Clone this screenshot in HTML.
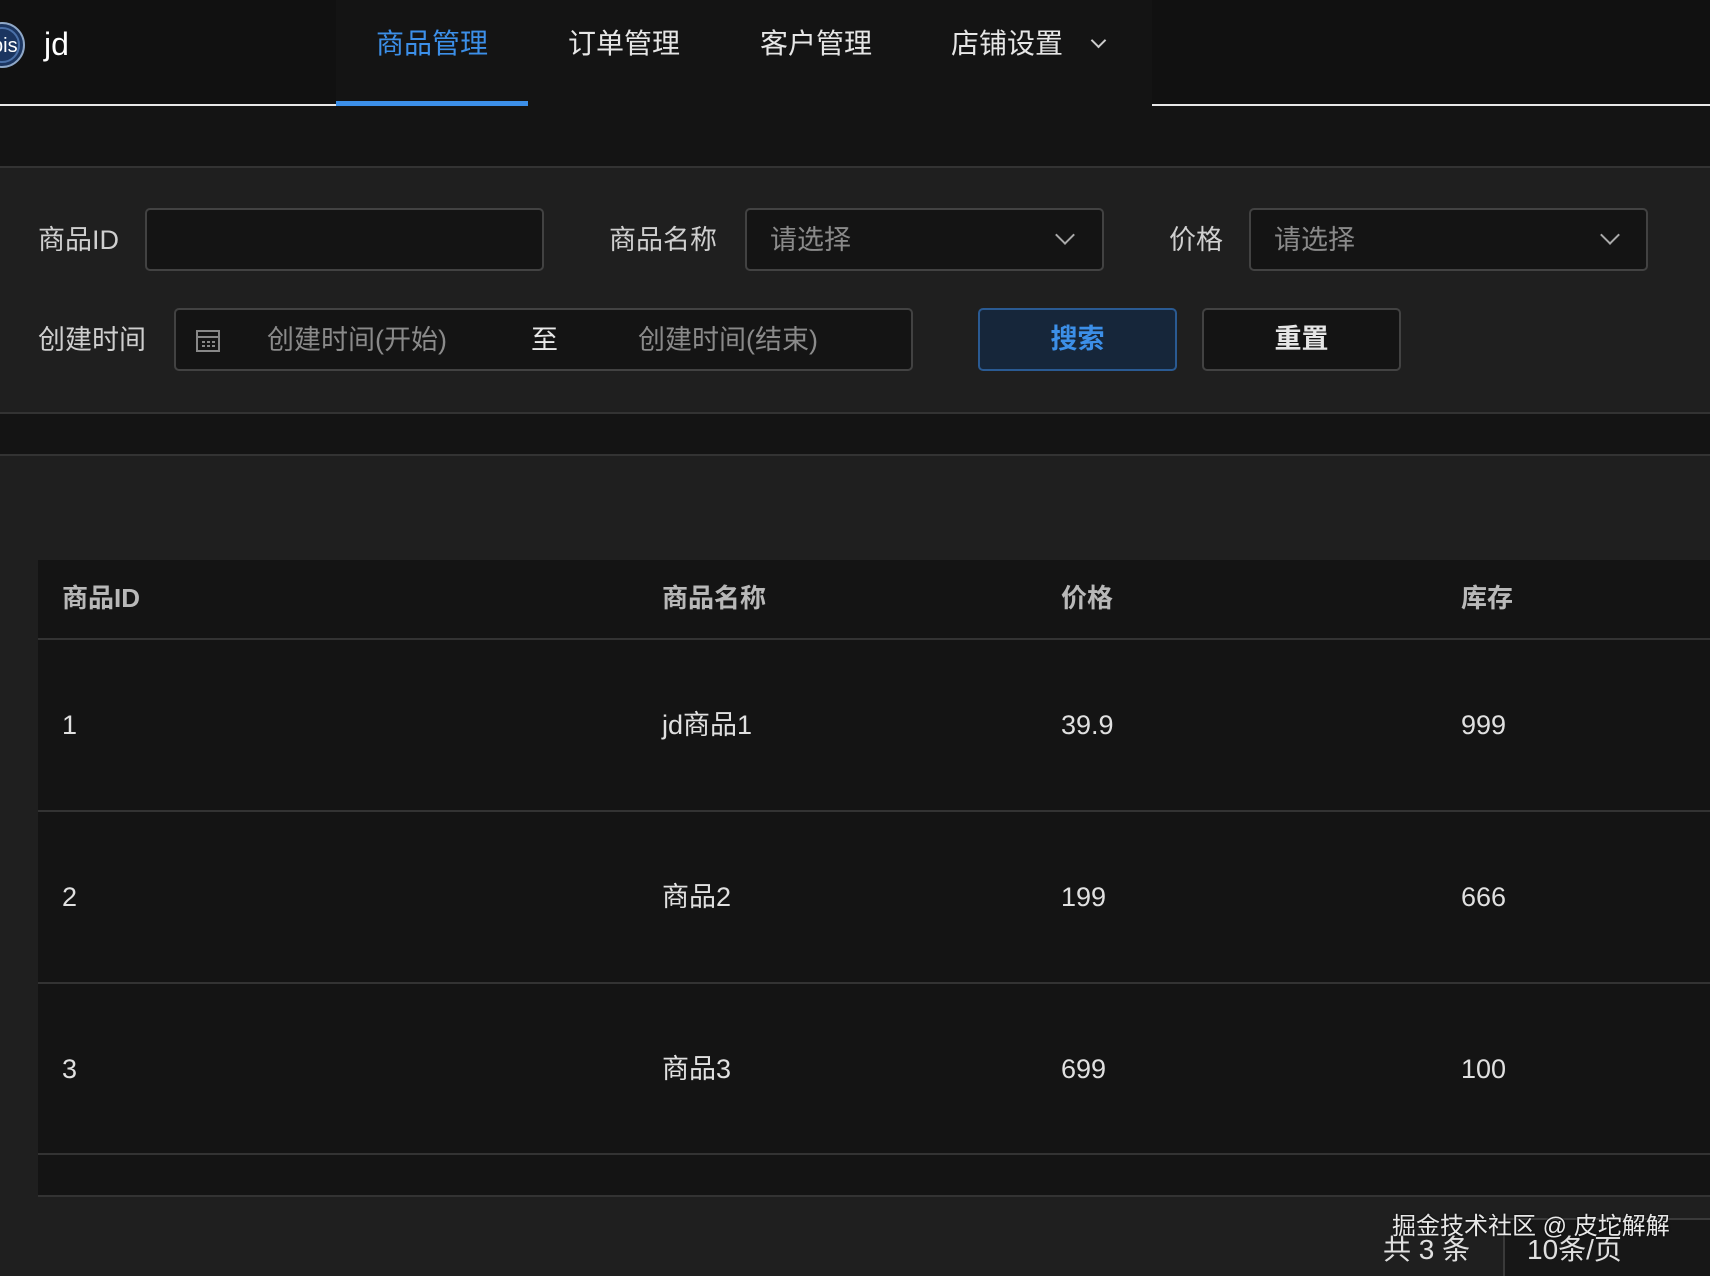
<!DOCTYPE html>
<html><head><meta charset="utf-8">
<style>
*{margin:0;padding:0;box-sizing:border-box}
html,body{width:1710px;height:1276px;overflow:hidden;background:#141414;font-family:"Liberation Sans","Noto Sans CJK SC",sans-serif;color:#e0e0e0}
.abs{position:absolute}
.hdr{position:absolute;left:0;top:0;width:1710px;height:106px;background:#111}
.hdr .mid{position:absolute;left:336px;top:0;width:816px;height:106px;background:#141414}
.line{position:absolute;height:2px;background:#e8e8e8;top:104px}
.nav{position:absolute;top:24px;font-size:28px;color:#e6e6e6;line-height:40px}
.panel{position:absolute;left:0;width:1710px;background:#1f1f1f;border-top:2px solid #333}
.lbl{position:absolute;font-size:27px;color:#cfcfcf;line-height:36px}
.box{position:absolute;border:2px solid #424242;border-radius:5px;background:#141414}
.ph{position:absolute;font-size:27px;color:#8a8a8a;line-height:36px}
.chev{position:absolute;width:14px;height:14px;border-right:2px solid #aaa;border-bottom:2px solid #aaa;transform:rotate(45deg)}
.btn{position:absolute;border-radius:5px;font-size:27px;font-weight:bold;text-align:center;line-height:58px}
.th{position:absolute;font-size:26px;font-weight:bold;color:#b8b8b8;top:580px;line-height:36px;height:36px}
.td{position:absolute;font-size:27px;color:#e0e0e0;line-height:36px;height:36px}
.hl{position:absolute;left:38px;width:1672px;height:2px;background:#333}
</style></head><body>
<div class="hdr"><div class="mid"></div></div>
<div class="line" style="left:0;width:336px"></div>
<div class="line" style="left:1152px;width:558px"></div>
<div class="abs" style="left:336px;top:101px;width:192px;height:5px;background:#3c8fe8"></div>
<svg class="abs" style="left:-22px;top:21px" width="48" height="48"><circle cx="24" cy="24" r="22" fill="#1b3560" stroke="#8fa8c8" stroke-width="2"/><circle cx="24" cy="24" r="17" fill="none" stroke="#4a70a8" stroke-width="2"/><text x="14" y="31" font-size="20" fill="#fff" font-family="Liberation Sans">bis</text></svg>
<div class="abs" style="left:44px;top:24px;font-size:32px;color:#fff;line-height:40px">jd</div>
<div class="nav" style="left:376px;color:#3c8fe8">商品管理</div>
<div class="nav" style="left:568px">订单管理</div>
<div class="nav" style="left:760px">客户管理</div>
<div class="nav" style="left:951px">店铺设置</div>
<div class="chev" style="left:1093px;top:35px;width:11px;height:11px;border-color:#ccc"></div>

<div class="panel" style="top:166px;height:248px;border-bottom:2px solid #333"></div>
<div class="lbl" style="left:38px;top:222px">商品ID</div>
<div class="box" style="left:145px;top:208px;width:399px;height:63px"></div>
<div class="lbl" style="left:609px;top:222px">商品名称</div>
<div class="box" style="left:745px;top:208px;width:359px;height:63px"></div>
<div class="ph" style="left:770px;top:222px">请选择</div>
<div class="chev" style="left:1058px;top:228px"></div>
<div class="lbl" style="left:1169px;top:222px">价格</div>
<div class="box" style="left:1249px;top:208px;width:399px;height:63px"></div>
<div class="ph" style="left:1274px;top:222px">请选择</div>
<div class="chev" style="left:1603px;top:228px"></div>

<div class="lbl" style="left:38px;top:322px">创建时间</div>
<div class="box" style="left:174px;top:308px;width:739px;height:63px"></div>
<svg class="abs" style="left:195px;top:327px" width="26" height="26"><rect x="2" y="4" width="22" height="20" fill="none" stroke="#888" stroke-width="2"/><line x1="2" y1="10" x2="24" y2="10" stroke="#888" stroke-width="2"/><g fill="#888"><rect x="7" y="14" width="3" height="2"/><rect x="12" y="14" width="3" height="2"/><rect x="17" y="14" width="3" height="2"/><rect x="7" y="18" width="3" height="2"/><rect x="12" y="18" width="3" height="2"/><rect x="17" y="18" width="3" height="2"/></g></svg>
<div class="ph" style="left:267px;top:322px">创建时间(开始)</div>
<div class="lbl" style="left:531px;top:322px;color:#e8e8e8">至</div>
<div class="ph" style="left:638px;top:322px">创建时间(结束)</div>
<div class="btn" style="left:978px;top:308px;width:199px;height:63px;border:2px solid #2a5a92;background:#16263a;color:#3c8fe8">搜索</div>
<div class="btn" style="left:1202px;top:308px;width:199px;height:63px;border:2px solid #424242;background:#141414;color:#e6e6e6">重置</div>

<div class="panel" style="top:454px;height:822px"></div>
<div class="abs" style="left:38px;top:560px;width:1672px;height:636px;background:#141414"></div>
<div class="th" style="left:62px">商品ID</div>
<div class="th" style="left:662px">商品名称</div>
<div class="th" style="left:1061px">价格</div>
<div class="th" style="left:1461px">库存</div>
<div class="hl" style="top:638px"></div>
<div class="hl" style="top:810px"></div>
<div class="hl" style="top:982px"></div>
<div class="hl" style="top:1153px"></div>
<div class="hl" style="top:1195px"></div>

<div class="td" style="left:62px;top:707px">1</div>
<div class="td" style="left:662px;top:707px">jd商品1</div>
<div class="td" style="left:1061px;top:707px">39.9</div>
<div class="td" style="left:1461px;top:707px">999</div>
<div class="td" style="left:62px;top:879px">2</div>
<div class="td" style="left:662px;top:879px">商品2</div>
<div class="td" style="left:1061px;top:879px">199</div>
<div class="td" style="left:1461px;top:879px">666</div>
<div class="td" style="left:62px;top:1051px">3</div>
<div class="td" style="left:662px;top:1051px">商品3</div>
<div class="td" style="left:1061px;top:1051px">699</div>
<div class="td" style="left:1461px;top:1051px">100</div>

<div class="abs" style="left:1503px;top:1218px;width:207px;height:58px;background:#171717;border-left:2px solid #3a3a3a;border-top:2px solid #3a3a3a"></div>
<div class="abs" style="left:1383px;top:1232px;font-size:28px;color:#e0e0e0;line-height:36px">共 3 条</div>
<div class="abs" style="left:1527px;top:1232px;font-size:28px;color:#e0e0e0;line-height:36px">10条/页</div>
<div class="abs" style="left:1392px;top:1212px;font-size:24px;color:#e8e8e8;text-shadow:0 0 2px #000;line-height:30px">掘金技术社区 @ 皮坨解解</div>
</body></html>
